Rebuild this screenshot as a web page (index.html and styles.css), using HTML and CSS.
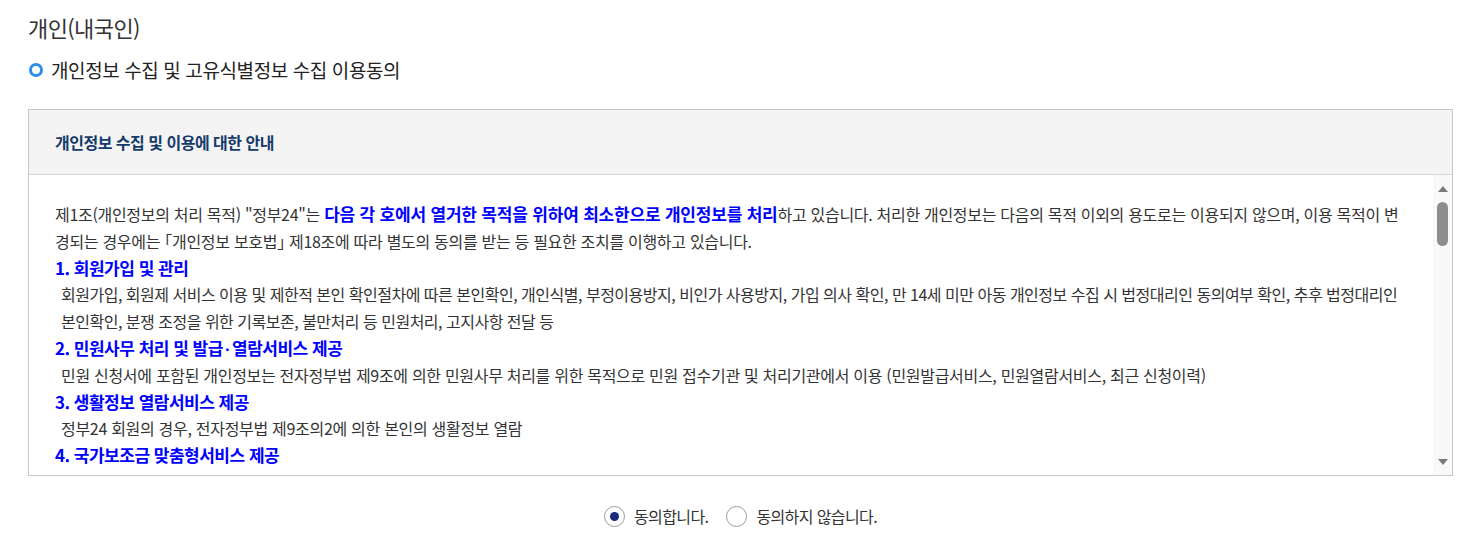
FILE: index.html
```html
<!DOCTYPE html>
<html lang="ko">
<head>
  <meta charset="UTF-8" />
  <title>개인정보 수집 및 이용동의</title>
  <link rel="stylesheet" href="styles.css">
</head>
<body>
  <div class="wrap">
    <h2 class="page-title">개인(내국인)</h2>
    <h3 class="sub-title"><span class="dot"></span>개인정보 수집 및 고유식별정보 수집 이용동의</h3>

    <div class="agree-box">
      <div class="agree-head">개인정보 수집 및 이용에 대한 안내</div>
      <div class="agree-row">
        <div class="agree-body">
          <p class="first">제1조(개인정보의 처리 목적) "정부24"는 <b class="hl">다음 각 호에서 열거한 목적을 위하여 최소한으로 개인정보를 처리</b>하고 있습니다. 처리한 개인정보는 다음의 목적 이외의 용도로는 이용되지 않으며, 이용 목적이 변경되는 경우에는 <span class="br">「</span>개인정보 보호법<span class="br">」</span> 제18조에 따라 별도의 동의를 받는 등 필요한 조치를 이행하고 있습니다.</p>
          <h4>1. 회원가입 및 관리</h4>
          <p class="indent tight">회원가입, 회원제 서비스 이용 및 제한적 본인 확인절차에 따른 본인확인, 개인식별, 부정이용방지, 비인가 사용방지, 가입 의사 확인, 만 14세 미만 아동 개인정보 수집 시 법정대리인 동의여부 확인, 추후 법정대리인 본인확인, 분쟁 조정을 위한 기록보존, 불만처리 등 민원처리, 고지사항 전달 등</p>
          <h4>2. 민원사무 처리 및 발급<span class="mid">·</span>열람서비스 제공</h4>
          <p class="indent">민원 신청서에 포함된 개인정보는 전자정부법 제9조에 의한 민원사무 처리를 위한 목적으로 민원 접수기관 및 처리기관에서 이용 (민원발급서비스, 민원열람서비스, 최근 신청이력)</p>
          <h4>3. 생활정보 열람서비스 제공</h4>
          <p class="indent">정부24 회원의 경우, 전자정부법 제9조의2에 의한 본인의 생활정보 열람</p>
          <h4>4. 국가보조금 맞춤형서비스 제공</h4>
          <p class="indent">보조금 관리에 관한 법률 제26조의6에 따라 국민이 받을 수 있는 국가보조금 및 혜택 정보를 맞춤형으로 안내</p>
        </div>
        <div class="scrollbar">
          <span class="arrow up"></span>
          <div class="track"><span class="thumb"></span></div>
          <span class="arrow down"></span>
        </div>
      </div>
    </div>

    <div class="agree-radio">
      <label class="radio"><input type="radio" name="agree" checked><span class="mark"></span>동의합니다.</label>
      <label class="radio"><input type="radio" name="agree"><span class="mark"></span>동의하지 않습니다.</label>
    </div>
  </div>
</body>
</html>
```

FILE: styles.css
```css
* {
  margin: 0;
  padding: 0;
  box-sizing: border-box;
}

body {
  font-family: 'Noto Sans CJK KR', 'Noto Sans', sans-serif;
  color: #333;
  background: #fff;
}

.wrap {
  padding: 12px 30px 0 28px;
}

.page-title {
  font-size: 22px;
  font-weight: 400;
  letter-spacing: -0.6px;
  line-height: 30px;
  color: #333;
}

.sub-title {
  display: flex;
  align-items: center;
  margin-top: 15px;
  font-size: 19px;
  font-weight: 400;
  letter-spacing: -0.4px;
  line-height: 26px;
  color: #222;
}

.dot {
  width: 14px;
  height: 14px;
  border: 3.5px solid #2b8fe9;
  border-radius: 50%;
  margin: 0 8px 0 1px;
}

/* agreement box */
.agree-box {
  margin-top: 26px;
  border: 1px solid #c8c8c8;
}

.agree-head {
  height: 65px;
  display: flex;
  align-items: center;
  padding-left: 26px;
  background: #f4f4f4;
  border-bottom: 1px solid #d6d6d6;
  font-size: 16px;
  font-weight: 700;
  letter-spacing: -0.5px;
  color: #153a6b;
}

.agree-row {
  display: flex;
  height: 300px;
}

.agree-body {
  flex: 1;
  overflow: hidden;
  padding: 26px 18px 0 26px;
  font-size: 16px;
  line-height: 26.8px;
  letter-spacing: -0.3px;
  word-break: keep-all;
  color: #333;
}

.agree-body .first {
  word-break: break-all;
  margin-right: 4px;
}

.agree-body .br {
  font-feature-settings: "halt";
}

.agree-body .hl {
  font-size: 17px;
  color: #0000ff;
  font-weight: 700;
  letter-spacing: -0.2px;
}

.agree-body h4 {
  font-size: 17px;
  font-weight: 700;
  color: #0000ff;
  letter-spacing: -0.5px;
}

.agree-body h4 .mid {
  font-family: 'Liberation Sans', sans-serif;
  line-height: 10px;
  padding: 0 2px;
}

.agree-body .indent {
  padding-left: 6px;
}

.agree-body .tight {
  letter-spacing: -0.5px;
}

/* scrollbar drawn beside the text */
.scrollbar {
  width: 19px;
  display: flex;
  flex-direction: column;
  background: #f9f9f9;
}

.arrow {
  height: 27px;
  display: flex;
  justify-content: center;
  align-items: center;
}

.arrow::before {
  content: "";
  border-left: 5.5px solid transparent;
  border-right: 5.5px solid transparent;
}

.arrow.up::before {
  border-bottom: 6px solid #7a7a7a;
}

.arrow.down::before {
  border-top: 6px solid #7a7a7a;
}

.track {
  flex: 1;
  display: flex;
  justify-content: center;
}

.thumb {
  width: 11px;
  height: 44px;
  border-radius: 6px;
  background: #8d8d8d;
}

/* radios */
.agree-radio {
  display: flex;
  justify-content: center;
  gap: 18px;
  margin-top: 28px;
}

.radio {
  display: flex;
  align-items: center;
  font-size: 16px;
  letter-spacing: -0.6px;
  color: #333;
  cursor: pointer;
}

.radio input {
  display: none;
}

.radio .mark {
  width: 21px;
  height: 21px;
  border: 1px solid #9a9a9a;
  border-radius: 50%;
  margin-right: 9px;
  position: relative;
}

.radio input:checked + .mark::after {
  content: "";
  position: absolute;
  left: 5px;
  top: 5px;
  width: 9px;
  height: 9px;
  border-radius: 50%;
  background: #1a2a80;
}
```
